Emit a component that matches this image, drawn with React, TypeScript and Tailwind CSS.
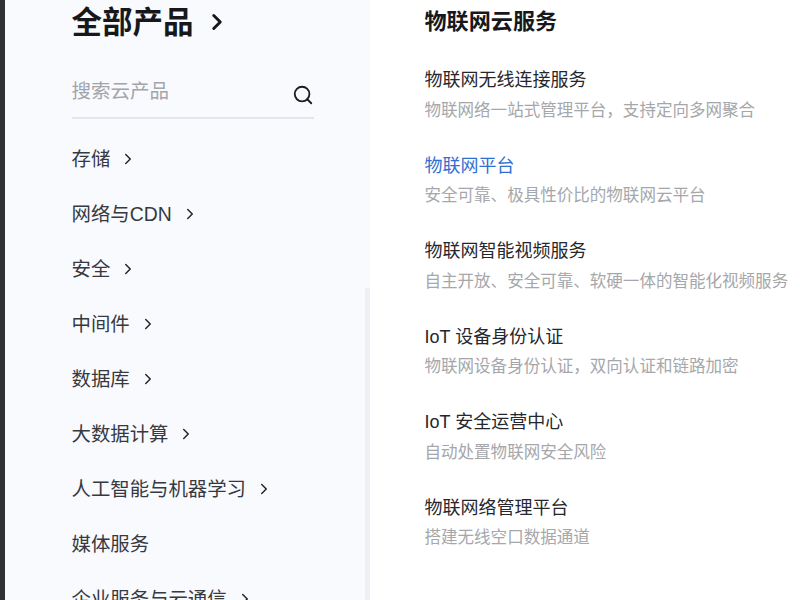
import { ChevronRight, Search } from "lucide-react";

const FONT = "font-['Liberation_Sans','Noto_Sans_CJK_SC',sans-serif]";

const categories = [
  { name: "存储", arrow: true },
  { name: "网络与CDN", arrow: true },
  { name: "安全", arrow: true },
  { name: "中间件", arrow: true },
  { name: "数据库", arrow: true },
  { name: "大数据计算", arrow: true },
  { name: "人工智能与机器学习", arrow: true },
  { name: "媒体服务", arrow: false },
  { name: "企业服务与云通信", arrow: true },
];

const services = [
  { title: "物联网无线连接服务", desc: "物联网络一站式管理平台，支持定向多网聚合" },
  { title: "物联网平台", desc: "安全可靠、极具性价比的物联网云平台", active: true },
  { title: "物联网智能视频服务", desc: "自主开放、安全可靠、软硬一体的智能化视频服务" },
  { title: "IoT 设备身份认证", desc: "物联网设备身份认证，双向认证和链路加密" },
  { title: "IoT 安全运营中心", desc: "自动处置物联网安全风险" },
  { title: "物联网络管理平台", desc: "搭建无线空口数据通道" },
];

export default function App() {
  return (
    <div className={`flex h-[600px] w-[800px] overflow-hidden bg-white ${FONT}`}>
      <div className="w-[5px] shrink-0 bg-[#303135]" />

      <aside className="relative w-[365px] shrink-0 overflow-hidden bg-[#f9fafe] pl-[66.5px]">
        <div className="flex h-[44px] items-center gap-[10px]">
          <h1 className="text-[30.5px] font-bold leading-[44px] text-[#16181c]">全部产品</h1>
          <ChevronRight className="h-[26px] w-[26px] text-[#16181c]" strokeWidth={2.75} />
        </div>

        <div className="mt-[24px] flex h-[51px] w-[242.5px] items-center justify-between border-b-2 border-[#e3e6ed]">
          <span className="-mt-[2px] text-[19.5px] text-[#a2a5ab]">搜索云产品</span>
          <Search className="mt-[4px] h-[22px] w-[22px] text-[#1b1d21]" strokeWidth={2} />
        </div>

        <ul className="mt-[13px]">
          {categories.map((item) => (
            <li key={item.name} className="flex h-[55px] items-center gap-[9px] text-[19.4px] text-[#36393f]">
              <span>{item.name}</span>
              {item.arrow && <ChevronRight className="-mt-[2px] h-[18px] w-[18px] text-[#23252a]" strokeWidth={2} />}
            </li>
          ))}
        </ul>

        <div className="absolute top-[288px] right-0 bottom-0 w-[5px] bg-[#edeff4]" />
      </aside>

      <main className="flex-1 pl-[54.5px]">
        <h2 className="mt-[6px] h-[32px] text-[22.1px] font-bold leading-[32px] text-[#16181c]">物联网云服务</h2>
        <ul className="mt-[29px]">
          {services.map((item) => (
            <li key={item.title} className="h-[85.5px]">
              <div className={`text-[18px] leading-[26px] ${item.active ? "text-[#2f6fd0]" : "text-[#25272c]"}`}>
                {item.title}
              </div>
              <div className="mt-[4.5px] whitespace-nowrap text-[16.55px] leading-[26px] text-[#a5a7ab]">{item.desc}</div>
            </li>
          ))}
        </ul>
      </main>
    </div>
  );
}
